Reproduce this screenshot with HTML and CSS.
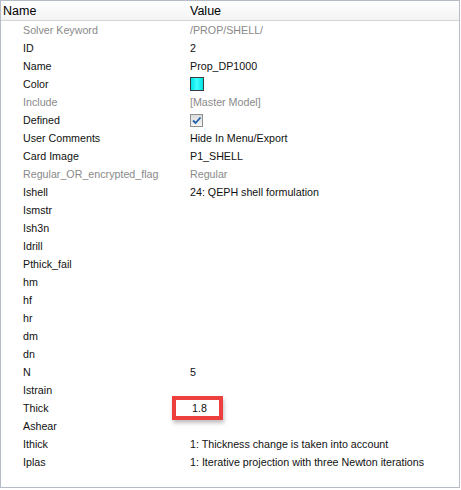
FILE: index.html
```html
<!DOCTYPE html>
<html lang="en">
<head>
  <meta charset="UTF-8">
  <title>Property Table</title>
  <link rel="stylesheet" href="styles.css">
</head>
<body>
  <div class="panel">
    <div class="header">
      <span class="col-name">Name</span>
      <span class="col-value">Value</span>
    </div>

    <div class="rows">
      <div class="row dim"><span class="col-name">Solver Keyword</span><span class="col-value">/PROP/SHELL/</span></div>
      <div class="row"><span class="col-name">ID</span><span class="col-value">2</span></div>
      <div class="row"><span class="col-name">Name</span><span class="col-value">Prop_DP1000</span></div>
      <div class="row"><span class="col-name">Color</span><span class="col-value"><span class="swatch"></span></span></div>
      <div class="row dim"><span class="col-name">Include</span><span class="col-value">[Master Model]</span></div>
      <div class="row">
        <span class="col-name">Defined</span>
        <span class="col-value">
          <span class="check">
            <svg width="11" height="11" viewBox="0 0 11 11">
              <path d="M2 5.5 L4.5 8 L9.5 2.5" fill="none" stroke="#1f5fa8" stroke-width="1.8"/>
            </svg>
          </span>
        </span>
      </div>
      <div class="row"><span class="col-name">User Comments</span><span class="col-value">Hide In Menu/Export</span></div>
      <div class="row"><span class="col-name">Card Image</span><span class="col-value">P1_SHELL</span></div>
      <div class="row dim"><span class="col-name">Regular_OR_encrypted_flag</span><span class="col-value">Regular</span></div>
      <div class="row"><span class="col-name">Ishell</span><span class="col-value">24: QEPH shell formulation</span></div>
      <div class="row"><span class="col-name">Ismstr</span><span class="col-value"></span></div>
      <div class="row"><span class="col-name">Ish3n</span><span class="col-value"></span></div>
      <div class="row"><span class="col-name">Idrill</span><span class="col-value"></span></div>
      <div class="row"><span class="col-name">Pthick_fail</span><span class="col-value"></span></div>
      <div class="row"><span class="col-name">hm</span><span class="col-value"></span></div>
      <div class="row"><span class="col-name">hf</span><span class="col-value"></span></div>
      <div class="row"><span class="col-name">hr</span><span class="col-value"></span></div>
      <div class="row"><span class="col-name">dm</span><span class="col-value"></span></div>
      <div class="row"><span class="col-name">dn</span><span class="col-value"></span></div>
      <div class="row"><span class="col-name">N</span><span class="col-value">5</span></div>
      <div class="row"><span class="col-name">Istrain</span><span class="col-value"></span></div>
      <div class="row">
        <span class="col-name">Thick</span>
        <span class="col-value"><span class="highlight">1.8</span></span>
      </div>
      <div class="row"><span class="col-name">Ashear</span><span class="col-value"></span></div>
      <div class="row"><span class="col-name">Ithick</span><span class="col-value">1: Thickness change is taken into account</span></div>
      <div class="row"><span class="col-name">Iplas</span><span class="col-value">1: Iterative projection with three Newton iterations</span></div>
    </div>
  </div>
</body>
</html>
```

FILE: styles.css
```css
body {
  margin: 0;
  background-color: #ffffff;
  font-family: "Liberation Sans", Arial, sans-serif;
  font-size: 10.7px;
  color: #111111;
}

.panel {
  width: 458px;
  height: 486px;
  border: 1px solid #b5bcc7;
  background-color: #ffffff;
}

.header {
  display: flex;
  align-items: center;
  height: 19px;
  border-bottom: 1px solid #d5d5d5;
  background: linear-gradient(#ffffff, #f3f3f3);
  color: #000000;
  font-size: 12.5px;
}

.header .col-name {
  width: 187px;
  padding-left: 2px;
}

.rows {
  display: flex;
  flex-direction: column;
}

.row {
  display: flex;
  align-items: center;
  height: 18px;
}

.row .col-name {
  width: 167px;
  padding-left: 22px;
}

.row.dim {
  color: #8a8a8a;
}

.swatch {
  display: inline-block;
  width: 12px;
  height: 12px;
  border: 1px solid #3c3c3c;
  background: linear-gradient(90deg, #00e5e5, #40ffff 50%, #00e0e0);
  vertical-align: middle;
}

.check {
  display: inline-flex;
  align-items: center;
  justify-content: center;
  width: 11px;
  height: 11px;
  border: 1px solid #8e8f8f;
  background: linear-gradient(#dcdcdc, #f4f4f4);
  vertical-align: middle;
}

.highlight {
  display: inline-block;
  position: relative;
  margin-left: -18px;
  padding: 2px 12px 2px 16px;
  border: 4px solid #ee3f3f;
  box-shadow: 1px 3px 4px rgba(0, 0, 0, 0.25);
}
```
